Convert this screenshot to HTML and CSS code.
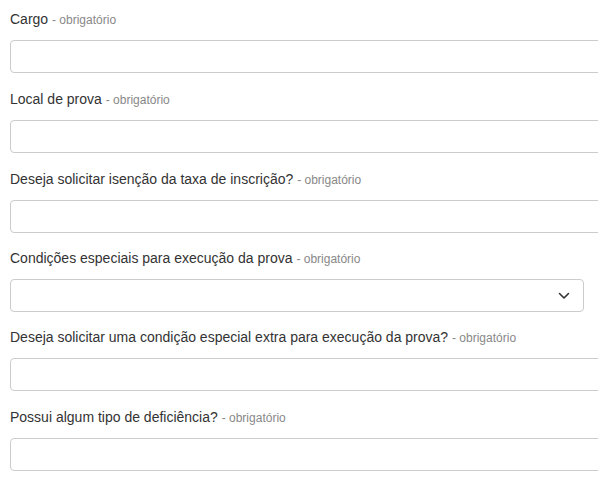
FILE: index.html
```html
<!DOCTYPE html>
<html lang="pt">
<head>
<meta charset="utf-8">
<link rel="stylesheet" href="styles.css">
</head>
<body>
<form class="form">
  <div class="field">
    <label class="label">Cargo <span class="req">- obrigatório</span></label>
    <input class="input" type="text">
  </div>
  <div class="field">
    <label class="label">Local de prova <span class="req">- obrigatório</span></label>
    <input class="input" type="text">
  </div>
  <div class="field">
    <label class="label">Deseja solicitar isenção da taxa de inscrição? <span class="req">- obrigatório</span></label>
    <input class="input" type="text">
  </div>
  <div class="field field-tight">
    <label class="label">Condições especiais para execução da prova <span class="req">- obrigatório</span></label>
    <div class="select">
      <svg class="chev" width="12" height="8" viewBox="0 0 12 8"><path d="M1.5 1.5 L6 6 L10.5 1.5" fill="none" stroke="#333" stroke-width="1.6" stroke-linecap="round" stroke-linejoin="round"/></svg>
    </div>
  </div>
  <div class="field field-tight">
    <label class="label">Deseja solicitar uma condição especial extra para execução da prova? <span class="req">- obrigatório</span></label>
    <input class="input" type="text">
  </div>
  <div class="field">
    <label class="label">Possui algum tipo de deficiência? <span class="req">- obrigatório</span></label>
    <input class="input" type="text">
  </div>
</form>
</body>
</html>
```
FILE: styles.css
```css
html, body {
  margin: 0;
  padding: 0;
  background: #fff;
  overflow: hidden;
}
body {
  font-family: "Liberation Sans", Arial, sans-serif;
  color: #333;
}
.form {
  padding: 9px 0 0 10px;
  display: flex;
  flex-direction: column;
  gap: 16px;
}
.field {
  display: flex;
  flex-direction: column;
  gap: 11px;
}
.field-tight {
  margin-top: -1px;
}
.label {
  display: block;
  font-size: 14px;
  line-height: 20px;
  height: 20px;
  color: #333;
}
.req {
  font-size: 12px;
  line-height: 1;
  color: #888;
}
.input, .select {
  box-sizing: border-box;
  height: 33px;
  border: 1px solid #ccc;
  border-radius: 4px;
  background: #fff;
  margin: 0;
  padding: 0 12px;
  font: inherit;
}
.input {
  width: 610px;
}
.select {
  width: 574px;
  display: flex;
  align-items: center;
  justify-content: flex-end;
  padding-right: 13px;
}
.chev {
  display: block;
}
```
